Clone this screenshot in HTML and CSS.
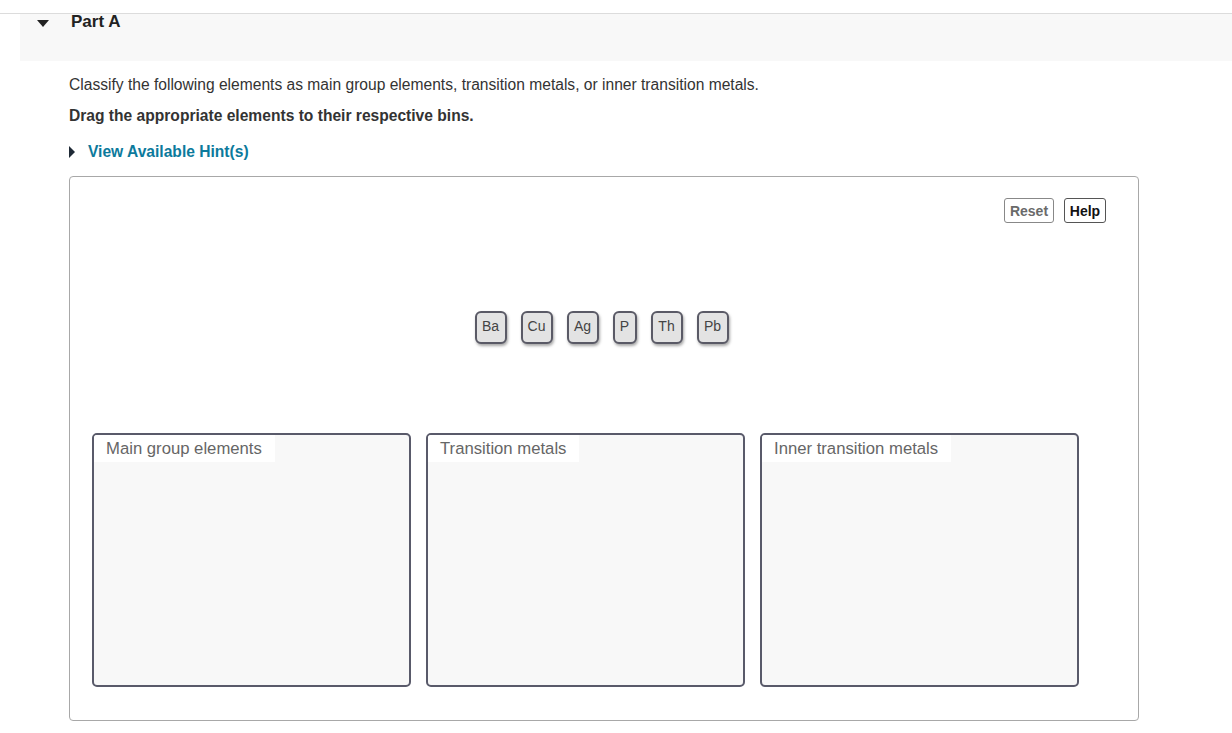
FILE: index.html
```html
<!DOCTYPE html>
<html>
<head>
<meta charset="utf-8">
<link rel="stylesheet" href="styles.css">
</head>
<body>
<div class="topline"></div>
<div class="part-header">
  <span class="caret-down"></span>
  <span class="part-title">Part A</span>
</div>
<div class="content">
  <p class="prompt">Classify the following elements as main group elements, transition metals, or inner transition metals.</p>
  <p class="instruction">Drag the appropriate elements to their respective bins.</p>
  <div class="hint"><span class="caret-right"></span><span class="hint-text">View Available Hint(s)</span></div>
  <div class="panel">
    <div class="toolbar">
      <button class="btn btn-reset">Reset</button>
      <button class="btn btn-help">Help</button>
    </div>
    <div class="tiles">
      <div class="tile">Ba</div>
      <div class="tile">Cu</div>
      <div class="tile">Ag</div>
      <div class="tile tile-narrow">P</div>
      <div class="tile">Th</div>
      <div class="tile">Pb</div>
    </div>
    <div class="bins">
      <div class="bin"><div class="bin-label">Main group elements</div></div>
      <div class="bin"><div class="bin-label">Transition metals</div></div>
      <div class="bin"><div class="bin-label">Inner transition metals</div></div>
    </div>
  </div>
</div>
</body>
</html>
```
FILE: styles.css
```css
html, body { margin: 0; padding: 0; background: #fff; }
body { font-family: "Liberation Sans", Arial, sans-serif; color: #333; }
.topline { height: 13px; border-bottom: 1px solid #dcdcdc; }
.part-header {
  margin-left: 20px;
  height: 47px;
  background: #f8f8f8;
  display: flex;
  align-items: flex-start;
}
.caret-down {
  width: 0; height: 0;
  border-left: 6px solid transparent;
  border-right: 6px solid transparent;
  border-top: 7px solid #222;
  margin: 6px 0 0 17px;
}
.part-title {
  font-weight: bold;
  font-size: 17px;
  color: #222;
  margin-left: 22px;
  line-height: 16px;
  margin-top: 0;
}
.content { padding-left: 69px; width: 1070px; }
.prompt { margin: 16px 0 0 0; font-size: 15.6px; line-height: 16px; color: #333; }
.instruction { margin: 15px 0 0 0; font-size: 15.6px; line-height: 16px; font-weight: bold; color: #333; }
.hint { margin-top: 20px; display: flex; align-items: center; height: 16px; }
.caret-right {
  width: 0; height: 0;
  border-top: 6px solid transparent;
  border-bottom: 6px solid transparent;
  border-left: 6px solid #1f2a36;
}
.hint-text { margin-left: 13px; font-size: 15.6px; font-weight: bold; color: #0c7a9c; line-height: 16px; }
.panel {
  margin-top: 16px;
  height: 545px;
  border: 1px solid #a8a8a8;
  border-radius: 4px;
  box-sizing: border-box;
  position: relative;
}
.toolbar { display: flex; justify-content: flex-end; gap: 10px; padding: 21px 32px 0 0; }
.btn {
  font-family: "Liberation Sans", Arial, sans-serif;
  font-weight: bold;
  font-size: 14px;
  background: #fff;
  border: 1px solid #888;
  border-radius: 3px;
  padding: 0 4px;
  height: 25px;
  line-height: 22px;
}
.btn-reset { color: #6a6a6a; width: 50px; }
.btn-help { color: #111; border-color: #555; width: 42px; }
.tiles { display: flex; justify-content: center; gap: 14px; margin-top: 88px; padding-right: 5px; }
.tile {
  width: 32px; height: 33px;
  box-sizing: border-box;
  border: 2px solid #5a5a66;
  border-radius: 6px;
  background: #e3e3e3;
  box-shadow: 1px 2px 3px rgba(0,0,0,0.35);
  font-size: 14px;
  color: #444;
  text-align: center;
  line-height: 26px;
}
.tile-narrow { width: 24px; }
.bins { display: flex; gap: 15px; margin-top: 89px; padding-left: 22px; }
.bin {
  width: 319px; height: 254px;
  box-sizing: border-box;
  border: 2px solid #595a6a;
  border-radius: 5px;
  background: #f8f8f8;
}
.bin-label {
  display: inline-block;
  background: #fff;
  color: #666;
  font-size: 16.7px;
  line-height: 27px;
  padding: 0 13px 0 12px;
  border-top-left-radius: 3px;
}
```
